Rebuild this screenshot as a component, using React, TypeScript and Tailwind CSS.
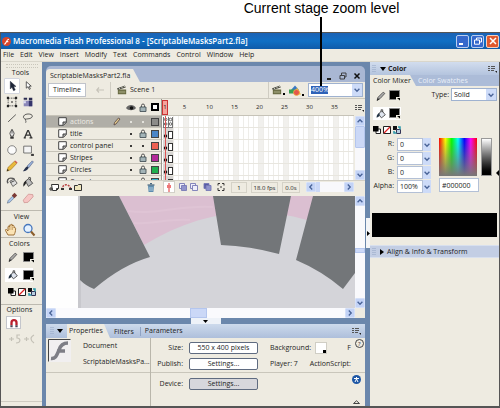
import type { ReactNode } from "react";

const MENUS = ["File", "Edit", "View", "Insert", "Modify", "Text", "Commands", "Control", "Window", "Help"];

interface Layer {
  name: string;
  locked: boolean;
  active?: boolean;
  swatch: string;
}

const LAYERS: Layer[] = [
  { name: "actions", locked: false, active: true, swatch: "bg-[#8b8b89]" },
  { name: "title", locked: true, swatch: "bg-[#4a86c8]" },
  { name: "control panel", locked: false, swatch: "bg-[#ee6152]" },
  { name: "Stripes", locked: true, swatch: "bg-[#b32a9a]" },
  { name: "Circles", locked: true, swatch: "bg-[#1fae4e]" },
  { name: "Complex", locked: true, swatch: "bg-[#38b6d0]" },
];

const FRAME_MARKS = [5, 10, 15, 20, 25, 30, 35];

function Icon({ children, size = "size-3.5" }: { children: ReactNode; size?: string }) {
  return (
    <svg viewBox="0 0 14 14" className={`${size} shrink-0`} fill="none" stroke="#333" strokeWidth="1" aria-hidden="true">
      {children}
    </svg>
  );
}

const TOOLS: { label: string; icon: ReactNode; selected?: boolean }[] = [
  { label: "Selection", selected: true, icon: <path d="M5 1.500v9l2-2 1.800 4 2-.9L9 7.500h2.700z" fill="#1c2438" stroke="#1c2438" strokeWidth=".5" /> },
  { label: "Subselection", icon: <path d="M5 2v7.500l2-1.700 1.500 3.200 1.200-.6L8.300 7.200h2.500z" fill="#fff" stroke="#333" strokeWidth=".9" /> },
  {
    label: "Free Transform",
    icon: (
      <>
        <path d="M2.500 2.500h9v9h-9z" strokeDasharray="2 1" strokeWidth=".9" />
        <path d="M1 1h2.500v2.500H1zM10.500 1H13v2.500h-2.500zM1 10.500h2.500V13H1zM10.500 10.500H13V13h-2.500zM6.200 6.200h1.600v1.600H6.200z" fill="#222" stroke="none" />
      </>
    ),
  },
  {
    label: "Gradient Transform",
    icon: (
      <>
        <path d="M2 5.500h10V12H2z" fill="#8b87b8" stroke="none" />
        <path d="M8 5.500h4V12H8z" fill="#35356b" stroke="none" />
        <path d="M2 2h4v2.500H2zM8 2h4v3H8z" fill="#2c2c50" stroke="none" />
        <path d="M1.500 6h3v2.500h-3z" fill="#dfdff2" stroke="none" />
      </>
    ),
  },
  { label: "Line", icon: <path d="M2.500 11.500 11.500 3" strokeWidth=".9" /> },
  { label: "Lasso", icon: <path d="M4.500 8.500C0 7.500 1 2.500 7 2.300c7-.1 6.500 5.200 0 5.700-2.500.3-3.500.2-3 1.500.3.800 1 .5.300 3" strokeWidth=".9" /> },
  {
    label: "Pen",
    icon: (
      <>
        <path d="M7 1.500 4.500 6l1 3.500h3l1-3.500z" fill="#e9e9e9" strokeWidth=".9" />
        <path d="M7 2v4.500" strokeWidth=".8" />
        <path d="M5 10h4v2.500H5z" fill="#333" stroke="none" />
      </>
    ),
  },
  { label: "Text", icon: <path d="M3 11.500 6.700 3h.8l3.500 8.500M4.500 8.300h5M2 11.500h2.500M8.800 11.500h3.400" strokeWidth="1.500" /> },
  { label: "Oval", icon: <circle cx="7" cy="7" r="5" fill="#fbfbfb" stroke="#555" strokeWidth=".8" /> },
  {
    label: "Rectangle",
    icon: (
      <>
        <path d="M2 2.500h9v8H2z" fill="#f4f4f4" stroke="#555" strokeWidth=".9" />
        <path d="M11 12h2.500v1.500H11z" fill="#111" />
      </>
    ),
  },
  {
    label: "Pencil",
    icon: (
      <>
        <path d="M1 13 2.500 8.500 9.800 1.500l2.700 2.500L5.500 11.500z" fill="#e9b93c" stroke="#8b6414" strokeWidth=".6" />
        <path d="m1 13 .8-2.400 1.700 1.500z" fill="#222" stroke="none" />
        <path d="m9.800 1.500 2.700 2.500 1-1L10.800.5z" fill="#d45c50" stroke="none" />
      </>
    ),
  },
  {
    label: "Brush",
    icon: (
      <>
        <path d="m6 7 6-6 1.300 1.300L8 9z" fill="#9bb3dc" stroke="#3e5176" strokeWidth=".6" />
        <path d="M1 13C3 11.500 3 9 6 7.200L7.800 9C6.500 12 4 13.200 1 13z" fill="#27324d" stroke="none" />
      </>
    ),
  },
  {
    label: "Ink Bottle",
    icon: (
      <>
        <path d="M2.500 8.500C.5 6 2 2.500 5.500 2.500S9 3 10 4" strokeWidth="1.600" stroke="#555" />
        <path d="m4.500 6 5-2.500 3.500 5-5 3.700z" fill="#ddd" strokeWidth=".8" />
        <path d="M5.500 7.500 10 5.500" />
      </>
    ),
  },
  {
    label: "Paint Bucket",
    icon: (
      <>
        <path d="m4 6 4-3 4.500 5.500-5 3.700z" fill="#bbb" strokeWidth=".9" />
        <path d="M1.700 12.500C1 9 2.500 6 5 5.500L4.500 9z" fill="#222" stroke="none" />
        <path d="M8 3V1.500L10 2v3" strokeWidth=".9" />
      </>
    ),
  },
  {
    label: "Eyedropper",
    icon: (
      <>
        <path d="m1.500 13 1-3L7.500 5l2 2L4.500 12z" fill="#a8c4ea" stroke="#4f6076" strokeWidth=".6" />
        <path d="m6.800 4.200 3.200-3.200 3 3-3.200 3.200z" fill="#7b3a35" stroke="none" />
      </>
    ),
  },
  {
    label: "Eraser",
    icon: <path d="m1.500 9.500 6-7 5 .5.500 2.500L7 12l-4.500.5z" fill="#f6c6c4" stroke="#c4817f" strokeWidth=".7" />,
  },
];

function Chevron({ dir = "down" }: { dir?: "up" | "down" | "left" | "right" }) {
  const d = {
    up: "M2 6.500 5 3.500l3 3",
    down: "m2 3.500 3 3 3-3",
    left: "M6.500 2 3.500 5l3 3",
    right: "m3.500 2 3 3-3 3",
  }[dir];
  return (
    <svg viewBox="0 0 10 10" className="size-2" fill="none" stroke="#4a6498" strokeWidth="1.700" aria-hidden="true">
      <path d={d} />
    </svg>
  );
}

function ScrollButton({ dir }: { dir: "up" | "down" | "left" | "right" }) {
  return (
    <button
      aria-label={`Scroll ${dir}`}
      className="flex size-[10px] shrink-0 items-center justify-center rounded-[1px] border border-[#d5e0f8] bg-[#c3d3f6]"
    >
      <Chevron dir={dir} />
    </button>
  );
}

function Clapper() {
  return (
    <svg viewBox="0 0 12 12" className="size-[10px]" aria-hidden="true">
      <path d="M1 5.500h10V11H1z" fill="#64663f" />
      <path d="M2 7h8v3H2z" fill="#8d8f68" />
      <path d="m0 4 9.500-3.500 1 2.500L1 6z" fill="#55564a" />
      <path d="m2 3.200 1.500 1.400M5 2l1.500 1.500M8 .9l1.300 1.400" stroke="#eee" strokeWidth="1" />
    </svg>
  );
}

function Swatch() {
  return (
    <svg viewBox="0 0 12 11" className="h-[11px] w-3 shrink-0" aria-hidden="true">
      <path d="M.5.500h10v9H.500z" fill="#000" stroke="#888" />
      <path d="M7 7h5v4H7z" fill="#eeece2" />
      <path d="M8 8h3v2.500z" fill="#000" />
    </svg>
  );
}

function StrokePencil() {
  return (
    <Icon size="size-3">
      <path d="m2.500 12 1-3.500 6-6L11.500 4 6 10z" fill="#aaa" strokeWidth=".8" />
      <path d="m2.500 12 1-2 1 1z" fill="#222" />
    </Icon>
  );
}

function FillBucket() {
  return (
    <Icon size="size-3">
      <path d="m4 7 4-4 4 5-4.500 3.500z" fill="#dfe5ef" strokeWidth=".9" />
      <path d="M2 11.500C1.500 9 3 6 5.500 6L5 9.500z" fill="#234" stroke="none" />
      <path d="M7 5V2h2v3" strokeWidth=".8" />
    </Icon>
  );
}

function ColorActions({ className }: { className: string }) {
  return (
    <div className={`flex ${className}`}>
      <button aria-label="Black and white">
        <svg viewBox="0 0 8 8" className="size-2">
          <path d="M3 3h4.500v4.500H3z" fill="#fff" stroke="#222" />
          <path d="M0 0h5.500v5.500H0z" fill="#000" />
        </svg>
      </button>
      <button aria-label="No color">
        <svg viewBox="0 0 8 8" className="size-2">
          <path d="M.5.500h7v7h-7z" fill="#fff" stroke="#222" />
          <path d="m1 7 6-6" stroke="#d22" strokeWidth="1.300" />
        </svg>
      </button>
      <button aria-label="Swap colors">
        <svg viewBox="0 0 8 8" className="size-2">
          <path d="M0 0h4v4H0z" fill="#111" />
          <path d="M3.500 3.500h4v4h-4z" fill="#b9cfe0" stroke="#335" />
          <path d="M5 1h2v2.500M1 5v2h2.500" fill="none" stroke="#2b98a8" strokeWidth="1.500" />
        </svg>
      </button>
    </div>
  );
}

function PanelMenuIcon() {
  return (
    <svg viewBox="0 0 9 8" className="h-2 w-[9px]" stroke="#555" fill="none" aria-hidden="true">
      <path d="M0 1.500h2M0 3.500h2M0 5.500h2M3 1.500h4M3 3.500h4M3 5.500h3" />
      <path d="M7 6h2v2z" fill="#222" stroke="none" />
    </svg>
  );
}

function Grip({ className = "" }: { className?: string }) {
  return (
    <svg viewBox="0 0 4 8" className={`h-2 w-1 ${className}`} stroke="#93a5c4" aria-hidden="true">
      <path d="M1 0v8M3 0v8" strokeWidth="1" strokeDasharray="1 1" />
    </svg>
  );
}

function ToolsPanel() {
  return (
    <aside className="flex w-[41px] shrink-0 flex-col items-center bg-[#eeebe1]">
      <div className="mt-0.5 h-1 w-8 border-y border-dotted border-[#c9c6bb]" />
      <h2 className="h-2.5 pr-0.5 leading-[10px]">Tools</h2>
      <div className="grid grid-cols-[16px_16px] pr-1">
        {TOOLS.map((tool) => (
          <button
            key={tool.label}
            aria-label={tool.label}
            className={
              tool.selected
                ? "flex size-4 items-center justify-center rounded-[1px] border border-[#d3d6de] bg-white"
                : "flex size-4 items-center justify-center"
            }
          >
            <Icon size="size-3">{tool.icon}</Icon>
          </button>
        ))}
      </div>

      <section className="mt-1 flex w-full flex-col items-center border-t border-[#bdbab0]">
        <h2 className="leading-[12px]">View</h2>
        <div className="flex gap-1 pr-1">
          <button aria-label="Hand">
            <Icon>
              <path
                d="M4 12 1.500 7.500c-.5-1 .7-1.500 1.300-.7L4 8V4c0-1 1.300-1 1.400 0V2.500c.1-1 1.400-1 1.500 0V2c.2-1 1.500-.8 1.600 0v1c.2-.9 1.500-.8 1.600.2V5c.3-.7 1.500-.5 1.500.5 0 3-.6 4.500-1.600 6.500z"
                fill="#fbe3b4"
                stroke="#94652a"
                strokeWidth=".9"
              />
              <path d="M5.400 4v3M7 3v4M8.500 3.500V7" stroke="#b68a4f" strokeWidth=".6" />
            </Icon>
          </button>
          <button aria-label="Zoom">
            <Icon>
              <circle cx="6" cy="5.500" r="4" fill="#e4f1ff" stroke="#4677bd" strokeWidth="1.300" />
              <path d="m9 8.500 3.500 4" stroke="#8b5d2b" strokeWidth="2" />
            </Icon>
          </button>
        </div>
      </section>

      <section className="flex w-full flex-col border-t border-[#bdbab0]">
        <h2 className="pr-1 text-center leading-[12px]">Colors</h2>
        <button aria-label="Stroke color" className="mx-1 flex h-[14px] w-7 items-center gap-1 pl-0.5">
          <StrokePencil />
          <Swatch />
        </button>
        <button aria-label="Fill color" className="mx-1 mt-1 flex h-[14px] w-7 items-center gap-1 bg-white pl-0.5">
          <FillBucket />
          <Swatch />
        </button>
        <ColorActions className="gap-0.5 pt-1.5 pb-2 pl-[7px]" />
      </section>

      <section className="flex w-full grow flex-col border-t border-[#bdbab0]">
        <h2 className="pr-1 text-center leading-[10px]">Options</h2>
        <button
          aria-label="Snap to objects"
          className="mt-px ml-[5px] flex h-[13px] w-[15px] items-center justify-center border border-[#c4c6cc] bg-white"
        >
          <Icon size="size-2.5">
            <path d="M3.500 10V6.500a3.500 3.500 0 0 1 7 0V10" stroke="#b91f2e" strokeWidth="3.200" />
            <path d="M3.500 10v3M10.500 10v3" stroke="#445" strokeWidth="3.200" />
          </Icon>
        </button>
        <svg viewBox="0 0 26 12" className="mt-1 ml-2 h-3 w-[26px]" fill="none" stroke="#c4c1b7" strokeWidth="1.200" aria-hidden="true">
          <path d="M0 6h5M2.500 4v4M11 2H8v3c4 0 4 5-1 5M15 6h5M17.500 4v4M25 2c-4 2-4 5 0 8" />
        </svg>
        <div className="mt-auto mb-1 border-t border-[#cfccc2]" />
      </section>
    </aside>
  );
}

function Lock() {
  return (
    <svg viewBox="0 0 8 9" className="h-[9px] w-2" aria-hidden="true">
      <path d="M2.500 4V2.500a1.500 1.500 0 0 1 3 0V4" fill="none" stroke="#555" />
      <path d="M1 4h6v4.500H1z" fill="#a3b4b8" stroke="#48555a" strokeWidth=".9" />
    </svg>
  );
}

function LayerRow({ layer }: { layer: Layer }) {
  return (
    <li
      className={
        layer.active
          ? "flex h-3 items-center border-b border-[#c6c3b8] bg-[#b0aea7] pl-3 text-[#eeece5]"
          : "flex h-3 items-center border-b border-[#c6c3b8] pl-3"
      }
    >
      <svg viewBox="0 0 9 9" className="mr-[3px] size-[9px] shrink-0" aria-hidden="true">
        <path d="M.7.700h7.600v4.800L5.500 8.300H.700z" fill="#fff" stroke="#444" />
        <path d="M8.300 5H5v3.300" fill="#999" stroke="#444" />
      </svg>
      <span className="grow">{layer.name}</span>
      {layer.active && (
        <svg viewBox="0 0 8 9" className="mr-1 h-[9px] w-2" aria-hidden="true">
          <path d="m1 8 .5-2.500L5.500 1l1.500 1L3 7z" fill="#e2c98c" stroke="#544" strokeWidth=".8" />
        </svg>
      )}
      <span className="flex w-3 justify-center">
        <i className={layer.active ? "size-0.5 rounded-full bg-[#f4f3ee]" : "size-0.5 rounded-full bg-black"} />
      </span>
      <span className="flex w-3 justify-center">
        {layer.locked ? <Lock /> : <i className={layer.active ? "size-0.5 rounded-full bg-[#f4f3ee]" : "size-0.5 rounded-full bg-black"} />}
      </span>
      <span className="flex w-3 justify-center">
        <i className={`size-2 border border-[#444] ${layer.swatch}`} />
      </span>
    </li>
  );
}

function FrameGrid() {
  return (
    <svg viewBox="0 0 192 64" preserveAspectRatio="xMinYMin slice" className="h-16 w-full" shapeRendering="crispEdges" aria-hidden="true">
      <path d="M0 0h192v64H0z" fill="#fff" />
      {FRAME_MARKS.map((n) => (
        <path key={n} d={`M${n * 5 - 4} 0h5v64h-5z`} fill="#f1f0ed" />
      ))}
      {Array.from({ length: 38 }, (_, i) => (
        <path key={i} d={`M${i * 5 + 6.5} 0v64`} stroke="#eeede9" />
      ))}
      {[12, 24, 36, 48, 60].map((y) => (
        <path key={y} d={`M0 ${y - 0.5}h192`} stroke="#e8e6df" />
      ))}
      {[1, 2, 3, 4, 5].map((row) => (
        <g key={row}>
          <path d={`M1 ${row * 12}h10v11H1z`} fill="#d8d6d3" />
          <path d={`M6.500 ${row * 12 + 3.5}h4v7h-4z`} fill="#fff" stroke="#333" />
          <circle cx="3.500" cy={row * 12 + 8} r="1.700" fill="#111" shapeRendering="auto" />
        </g>
      ))}
      <path d="M1.500 1v10h9V1M6 1v10" fill="none" stroke="#777" />
      <g fill="#fff" stroke="#333" strokeWidth=".7" shapeRendering="auto">
        <circle cx="3.700" cy="3.500" r="1.300" />
        <circle cx="8.500" cy="3.500" r="1.300" />
        <circle cx="3.700" cy="8" r="1.300" />
        <circle cx="8.500" cy="8" r="1.300" />
      </g>
      <path d="M3.500 0v64" stroke="#d55" strokeWidth="1" />
    </svg>
  );
}

function Timeline() {
  return (
    <section aria-label="Timeline" className="bg-[#eeebe1] pb-[3px]">
      <div className="flex">
        <div className="w-[116px] shrink-0 border-r border-[#9a988f]">
          <div className="flex h-[17px] items-center justify-end border-b border-[#c6c3b8]">
            <span className="flex w-3 justify-center">
              <svg viewBox="0 0 10 7" className="h-[7px] w-2.5" aria-label="Show all layers">
                <path d="M0 4c2-4 8-4 10 0-2 3-8 3-10 0z" fill="#666" />
                <circle cx="5.500" cy="4" r="1.800" fill="#111" />
              </svg>
            </span>
            <span className="flex w-3 justify-center">
              <Lock />
            </span>
            <span className="flex w-3 justify-center">
              <i className="size-2 border-2 border-black bg-white" />
            </span>
          </div>
          <ul className="h-16 overflow-hidden">
            {LAYERS.map((layer) => (
              <LayerRow key={layer.name} layer={layer} />
            ))}
          </ul>
        </div>

        <div className="min-w-0 grow">
          <div className="flex h-[17px] items-center overflow-hidden border-b border-[#c6c3b8] text-[6px]">
            <span className="flex h-[15px] w-[6px] shrink-0 items-center justify-center border border-[#c33] bg-[#f5a39b]">1</span>
            <span className="w-[4px] shrink-0" />
            {FRAME_MARKS.map((n) => (
              <span key={n} className="flex w-[25px] shrink-0 items-center justify-center">
                {n}
              </span>
            ))}
          </div>
          <FrameGrid />
        </div>

        <div className="flex w-[11px] shrink-0 flex-col items-center">
          <button aria-label="Frame view" className="flex h-[17px] items-center">
            <PanelMenuIcon />
          </button>
          <ScrollButton dir="up" />
          <div className="w-[10px] grow bg-[#f8f8fb]">
            <div className="h-[22px] rounded-[1px] border border-[#b4c6ee] bg-[#cbd8f7]" />
          </div>
          <ScrollButton dir="down" />
        </div>
      </div>

      <div className="flex h-[13px] items-center border-t border-[#d2cfc5] pl-[3px]">
        <div className="flex w-[98px] shrink-0">
          <svg viewBox="0 0 34 9" className="h-[9px] w-[34px]" fill="#fff" stroke="#333" aria-hidden="true">
            <path d="M2.500 1.500h7v4l-2 2h-4zM9.500 5.500h-2v2" />
            <path d="M0 6h4M2 4v4" />
            <path d="M13 7c0-7 8-7 9 0" fill="none" stroke="#b44" strokeDasharray="2 1" strokeWidth="1.500" />
            <path d="M12 6h3M20 6h3" strokeWidth="2" />
            <path d="M25.500 2.500h3l1-1h3v6h-7z" fill="#eee6bd" />
          </svg>
        </div>
        <button aria-label="Delete layer" className="mr-2 w-2">
          <svg viewBox="0 0 8 9" className="h-[9px] w-2">
            <path d="M1 2.500h6L6.400 9H1.600z" fill="#5d8cae" />
            <path d="M.5 2h7M3 .7h2" stroke="#244a6b" />
            <path d="M3 4v4M5 4v4" stroke="#d6e6f2" strokeWidth=".7" />
          </svg>
        </button>
        <div className="flex min-w-0 grow items-center text-[6px]">
          <button aria-label="Center frame" className="flex h-3 w-3 shrink-0 items-center justify-center border border-[#d2d0c8] bg-white">
            <svg viewBox="0 0 6 9" className="h-[9px] w-1.5" aria-hidden="true">
              <path d="M3 0v9" stroke="#d33" />
              <path d="M1 2h4v3H1z" fill="#e77" />
            </svg>
          </button>
          <svg viewBox="0 0 50 10" className="mx-[3px] h-2.5 w-[50px] shrink-0" fill="#eeeefa" stroke="#7779b5" strokeWidth=".9" aria-hidden="true">
            <path d="M1.500 1.500h5v5h-5z" />
            <path d="M3.500 3.500h5v5h-5z" fill="#9194cc" />
            <path d="M12.500 1.500h5v5h-5z" />
            <path d="M14.500 3.500h5v5h-5z" />
            <path d="M26 1.500h5v5h-5z" fill="#575aa5" />
            <path d="M28 3.500h5v5h-5z" fill="#9093cc" />
            <path d="M42 1.500h-2v2M40 6v2.500h2M44 1.500h2v2M46 6v2.500h-2M42 5h2" fill="none" stroke="#222" />
          </svg>
          <span className="h-[11px] w-4 shrink-0 border border-[#d5d2c7] text-center leading-[10px]">1</span>
          <span className="ml-1 h-[11px] w-[27px] shrink-0 border border-[#d5d2c7] text-center leading-[10px]">18.0 fps</span>
          <span className="ml-1 h-[11px] w-[18px] shrink-0 border border-[#d5d2c7] text-center leading-[10px]">0.0s</span>
          <div className="mr-[11px] ml-1.5 flex grow bg-[#f8f8fb]">
            <ScrollButton dir="left" />
            <div className="h-[10px] w-1 bg-[#cbd8f7]" />
            <div className="grow" />
            <ScrollButton dir="right" />
          </div>
        </div>
      </div>
    </section>
  );
}

function Stage() {
  return (
    <section aria-label="Stage" className="bg-[#fdfdfc]">
      <div className="flex">
        <svg viewBox="0 0 309 112" preserveAspectRatio="xMidYMid slice" className="h-[112px] min-w-0 grow">
          <path d="M0 0h309v112H0z" fill="#fefefe" />
          <path d="M32 0h277v112H32z" fill="#d4d4d9" />
          <path d="M32 0h3v112h-3z" fill="#c8c8cd" />
          <path d="M73 0h197l-9 24C205 8 150 17 98 49z" fill="#dbbfd1" />
          <path d="M82 15c30 4 50-6 85-4M88 27c20 2 32-5 56-3" stroke="#dfc4d5" strokeWidth="2" fill="none" />
          <path d="M34 0h39l31 61Q76 69 48 93 40 90 34 84z" fill="#737679" />
          <path d="M167 0h78l-12 58Q204 50 175 49z" fill="#737679" />
          <path d="M267 0h42v77l-12 16Q276 75 250 64z" fill="#737679" />
        </svg>
        <div className="flex w-[10px] shrink-0 flex-col bg-[#f9f9fc]">
          <ScrollButton dir="up" />
          <div className="h-[42px]" />
          <div className="h-[5px] border border-[#b4c6ee] bg-[#cbd8f7]" />
          <div className="grow" />
          <ScrollButton dir="down" />
        </div>
      </div>
      <div className="flex h-[10px] bg-[#fafafd]">
        <ScrollButton dir="left" />
        <div className="w-[134px]" />
        <div className="w-[17px] border border-[#b4c6ee] bg-[#cbd8f7]" />
        <div className="grow" />
        <ScrollButton dir="right" />
        <div className="w-[10px] bg-[#eeebe1]" />
      </div>
    </section>
  );
}

function DocumentWindow() {
  return (
    <section className="overflow-hidden rounded-t-[5px] bg-[#a9b7d3]">
      <header className="flex h-4 items-end">
        <h2 className="flex h-[13px] w-[94px] items-center rounded-tl-[4px] bg-[#eeebe1] pl-1 [clip-path:polygon(0_0,87px_0,100%_100%,0_100%)]">
          ScriptableMasksPart2.fla
        </h2>
        <div className="mr-1 ml-auto flex h-full items-center gap-1.5 pt-1">
          <button aria-label="Minimize document" className="flex h-2 w-1.5 items-end">
            <i className="h-0.5 w-1 bg-[#222]" />
          </button>
          <button aria-label="Restore document">
            <svg viewBox="0 0 8 8" className="size-2" fill="none" stroke="#333">
              <path d="M2.500 3V1h4.500v4H6M1 3.500h4.500V7H1z" strokeWidth=".9" />
            </svg>
          </button>
          <button aria-label="Close document">
            <svg viewBox="0 0 8 8" className="size-2" stroke="#111" strokeWidth="1.500">
              <path d="m1.500 1.500 5 5M6.500 1.500l-5 5" />
            </svg>
          </button>
        </div>
      </header>

      <div className="flex h-[17px] items-center border-b border-[#cbc8bd] bg-[#eeebe1] pr-0.5 pl-0.5">
        <button className="h-[14px] w-[38px] border border-[#c0c3ca] bg-white text-center leading-[12px]">Timeline</button>
        <svg viewBox="0 0 8 6" className="mr-1.5 ml-2.5 h-1.5 w-2" fill="none" stroke="#c6c3b9" strokeWidth="1.200" aria-hidden="true">
          <path d="M8 3H1M3 .5.800 3 3 5.500" />
        </svg>
        <i className="mr-1.5 h-4 w-px bg-[#cfccc2]" />
        <Clapper />
        <span className="ml-[3px]">Scene 1</span>
        <i className="mr-[3px] ml-auto h-4 w-px bg-[#cfccc2]" />
        <button aria-label="Edit scene" className="flex items-end">
          <Clapper />
          <i className="ml-px size-0.5 bg-black" />
        </button>
        <button aria-label="Edit symbols" className="ml-1 flex items-end">
          <svg viewBox="0 0 12 11" className="h-[11px] w-3">
            <path d="M6 .5 10 5H2z" fill="#3a79c4" />
            <path d="M0 4.500h6v4H0z" fill="#3aa052" />
            <path d="m8 2.500 4 7H5z" fill="#e8c33f" />
            <circle cx="7.500" cy="7.500" r="3" fill="#e4574a" stroke="#f0c040" strokeWidth=".7" />
          </svg>
          <i className="ml-px size-0.5 bg-black" />
        </button>
        <div className="ml-1 flex h-[14px] w-[55px] items-center border border-[#9fb2d0] bg-white pl-0.5">
          <input aria-label="Stage zoom" defaultValue="400%" className="h-2 w-[17px] bg-[#2f62b8] p-0 text-white outline-none" />
          <button aria-label="Zoom levels" className="ml-auto flex h-full w-[10px] items-center justify-center bg-[#cddbf8]">
            <Chevron />
          </button>
        </div>
      </div>

      <Timeline />
      <Stage />
    </section>
  );
}

function PropertiesPanel() {
  return (
    <section aria-label="Property inspector" className="flex grow flex-col bg-[#eeebe1]">
      <div className="flex h-[14px] items-center bg-linear-to-b from-[#cddaec] to-[#aebfdb] text-[#222]">
        <Grip className="ml-1" />
        <svg viewBox="0 0 6 4" className="ml-[3px] h-1 w-1.5" aria-hidden="true">
          <path d="M0 0h6L3 4z" />
        </svg>
        <button className="ml-1 h-full w-[43px] bg-[#eeebe1] pl-0.5 text-left [clip-path:polygon(0_0,37px_0,100%_100%,0_100%)]">Properties</button>
        <button className="border-r border-[#8fa3c4] pr-1.5 pl-1 leading-[9px]">Filters</button>
        <button className="px-1">Parameters</button>
        <span className="mr-1 ml-auto">
          <PanelMenuIcon />
        </span>
      </div>

      <div className="flex grow">
        <div className="w-[105px] shrink-0 border-r border-[#b9b6ab]">
          <div className="flex h-[35px] gap-3 border-b border-[#c9c6bb] pl-0.5">
            <svg viewBox="0 0 23 23" className="mt-px size-[23px] shrink-0" aria-label="Flash document">
              <path d="M1 1h22v22H1z" fill="#f1eff0" />
              <path d="M.5 22.500V.500h22" fill="none" stroke="#444" />
              <path d="M3 19.500c5 .5 6-4 8-8.500 1.500-5 4-7 9-7M9 12h8" fill="none" stroke="#7e7e86" strokeWidth="3.500" />
            </svg>
            <div className="min-w-0">
              <p className="mt-[3px] leading-[10px]">Document</p>
              <p className="mt-1.5 leading-[10px] whitespace-nowrap">ScriptableMasksPa...</p>
            </div>
          </div>
        </div>

        <div className="min-w-0 grow">
          <div className="flex h-[35px] border-b border-[#c9c6bb]">
            <div className="grid shrink-0 grid-cols-[32px_69px] grid-rows-[12px_12px] gap-x-1.5 gap-y-1 pt-1 leading-[12px]">
              <span id="size" className="text-right">Size:</span>
              <button aria-describedby="size" className="rounded-[2px] border border-[#5f6b80] bg-white leading-[10px]">550 x 400 pixels</button>
              <span id="publish" className="text-right">Publish:</span>
              <button aria-describedby="publish" className="rounded-[2px] border border-[#5f6b80] bg-white leading-[10px]">Settings...</button>
            </div>
            <div className="ml-3 grid grow grid-rows-[12px_12px] gap-y-1 pt-1 leading-[12px]">
              <div className="flex items-center">
                Background:
                <button aria-label="Background color" className="ml-1 flex size-3 items-end justify-end border border-[#d0cec5] bg-white">
                  <i className="size-[3px] bg-black" />
                </button>
                <span className="ml-auto">F</span>
              </div>
              <div className="flex gap-3 whitespace-nowrap">
                <span>Player: 7</span>
                <span>ActionScript:</span>
              </div>
            </div>
            <button aria-label="Help" className="mt-px mr-1 ml-1 flex size-[9px] shrink-0 items-center justify-center rounded-full border border-[#444] text-[6px] leading-none">
              ?
            </button>
          </div>
          <div className="flex items-start">
            <div className="grid grid-cols-[32px_69px] grid-rows-[12px] gap-x-1.5 pt-[5px] leading-[12px]">
              <span id="device" className="text-right">Device:</span>
              <button aria-describedby="device" className="rounded-[2px] border border-[#5f6b80] bg-[#d7d7dc] leading-[10px]">Settings...</button>
            </div>
            <div className="mr-1 ml-auto flex flex-col items-center gap-4 pt-0.5">
              <svg viewBox="0 0 9 9" className="size-[9px]" aria-label="Accessibility">
                <circle cx="4.500" cy="4.500" r="4.500" fill="#1e57a5" />
                <path d="M2 3.500h5M4.500 2v2.500M4.500 4 3 7M4.500 4 6 7" stroke="#fff" strokeWidth="1" />
              </svg>
              <svg viewBox="0 0 7 4" className="h-1 w-[7px]" fill="none" stroke="#444" aria-hidden="true">
                <path d="M.5 3.500 3.500.800l3 2.700z" />
              </svg>
            </div>
          </div>
        </div>
      </div>
    </section>
  );
}

function Spinner({ id, label, value }: { id: string; label: string; value: string }) {
  return (
    <>
      <label htmlFor={id} className="text-right leading-[12px]">
        {label}
      </label>
      <div className="flex h-[13px]">
        <input id={id} defaultValue={value} className="w-[26px] border border-[#b3c0d6] bg-white px-0.5 outline-none" />
        <button aria-label={`${label} slider`} className="flex w-2 items-center justify-center bg-[#cddbf8]">
          <Chevron />
        </button>
      </div>
    </>
  );
}

function ColorPanel() {
  return (
    <aside className="flex w-[130px] shrink-0 flex-col border-r border-[#555] bg-[#eeebe1]">
      <header className="flex h-[13px] items-center bg-linear-to-b from-[#d2ddee] to-[#b4c4de]">
        <Grip className="ml-0.5" />
        <svg viewBox="0 0 6 4" className="mr-0.5 ml-1 h-1 w-1.5" aria-hidden="true">
          <path d="M0 0h6L3 4z" />
        </svg>
        <h2 className="font-bold">Color</h2>
        <span className="mr-0.5 ml-auto">
          <PanelMenuIcon />
        </span>
      </header>
      <div className="flex h-[11px] bg-[#acbcd8]">
        <button className="w-[46px] bg-[#eeebe1] pl-[3px] text-left leading-[11px] [clip-path:polygon(0_0,40px_0,100%_100%,0_100%)]">Color Mixer</button>
        <button className="ml-0.5 leading-[11px] text-[#e9eff9]">Color Swatches</button>
      </div>

      <div className="flex justify-between pt-0.5 pr-0.5">
        <div className="ml-[3px]">
          <button aria-label="Stroke color" className="flex h-[15px] w-7 items-center gap-0.5 pl-0.5">
            <StrokePencil />
            <Swatch />
          </button>
          <button aria-label="Fill color" className="mt-1 flex h-[13px] w-7 items-center gap-0.5 bg-white pl-0.5">
            <FillBucket />
            <Swatch />
          </button>
          <ColorActions className="mt-1.5 gap-0.5" />
        </div>
        <div className="flex h-[13px] items-center gap-0.5">
          <label htmlFor="fill-type">Type:</label>
          <div className="relative">
            <select id="fill-type" className="block h-[13px] w-[46px] appearance-none border border-[#9fb2d0] bg-white px-0.5">
              <option>Solid</option>
            </select>
            <span className="pointer-events-none absolute inset-y-px right-px flex w-2.5 items-center justify-center bg-[#cddbf8]">
              <Chevron />
            </span>
          </div>
        </div>
      </div>

      <div className="mt-1 flex">
        <div className="grid grid-cols-[24px_34px] gap-x-[3px] gap-y-px">
          <Spinner id="red" label="R:" value="0" />
          <Spinner id="green" label="G:" value="0" />
          <Spinner id="blue" label="B:" value="0" />
          <Spinner id="alpha" label="Alpha:" value="100%" />
        </div>
        <div className="ml-2">
          <div className="flex gap-1">
            <div className="size-[38px] bg-[linear-gradient(to_bottom,transparent,#777),linear-gradient(to_right,#f00,#ff0,#0f0,#0ff,#00f,#f0f,#f00)]" />
            <div className="h-[38px] w-[11px] border border-[#999] bg-linear-to-b from-white to-black" />
            <svg viewBox="0 0 3 6" className="h-1.5 w-[3px] self-end" aria-hidden="true">
              <path d="M3 0v6L0 3z" />
            </svg>
          </div>
          <input aria-label="Hex color" defaultValue="#000000" className="mt-0.5 block h-[14px] w-10 border border-[#b3c0d6] bg-white px-0.5 outline-none" />
        </div>
      </div>

      <div className="mx-0.5 mt-5 h-6 bg-black" />
      <header className="mt-2 flex h-[13px] items-center border-y border-[#d8e0ee] bg-[#c3cee4]">
        <Grip className="ml-0.5" />
        <svg viewBox="0 0 4 6" className="mr-[3px] ml-1 h-1.5 w-1" aria-hidden="true">
          <path d="M0 0v6l4-3z" />
        </svg>
        <h2>Align &amp; Info &amp; Transform</h2>
      </header>
    </aside>
  );
}

export default function App() {
  return (
    <div className="flex min-h-screen flex-col bg-white font-['Open_Sans','Noto_Sans',sans-serif] text-[7px] leading-[10px] text-[#1d1d1d]">
      <div className="relative flex h-8 shrink-0 justify-center pl-[143px] font-['Liberation_Sans',Arial,sans-serif] text-[14px] leading-[17px] text-black">
        Current stage zoom level
        {/* callout line from the caption down to the zoom box */}
        <i className="absolute top-[17px] left-[calc(50%+70px)] z-10 h-[69px] w-0.5 bg-black" />
      </div>

      <main className="flex grow flex-col border-t border-b-2 border-l border-[#555]">
        <header className="flex h-4 items-center bg-linear-to-b from-[#1b62b5] via-[#0f6fc4] to-[#0f5ba9] pr-px pl-px text-white">
          <svg viewBox="0 0 10 10" className="mr-0.5 size-[9px]" aria-hidden="true">
            <circle cx="5" cy="5" r="5" fill="#d8452a" />
            <path d="M2.500 8C5 8 4.500 2.500 7.800 2.500M4.500 5.200h2.500" fill="none" stroke="#fff" strokeWidth="1.300" />
          </svg>
          <h1 className="text-[8px] font-semibold whitespace-nowrap">Macromedia Flash Professional 8 - [ScriptableMasksPart2.fla]</h1>
          <div className="ml-auto flex gap-0.5">
            <button aria-label="Minimize" className="flex size-[13px] items-end rounded-[2px] border border-[#b9cdf0] bg-[#3568cc] p-0.5">
              <i className="h-0.5 w-1 bg-white" />
            </button>
            <button aria-label="Restore" className="flex size-[13px] items-center justify-center rounded-[2px] border border-[#b9cdf0] bg-[#3568cc]">
              <svg viewBox="0 0 8 8" className="size-2" fill="none" stroke="#fff">
                <path d="M2.500 3V1h5v4H6M.500 3h5v4.200h-5z" />
              </svg>
            </button>
            <button aria-label="Close" className="flex size-[13px] items-center justify-center rounded-[2px] border border-[#f3d0c0] bg-[#e0592e]">
              <svg viewBox="0 0 8 8" className="size-2" stroke="#fff" strokeWidth="1.500">
                <path d="m1 1 6 6M7 1 1 7" />
              </svg>
            </button>
          </div>
        </header>

        <nav className="flex h-[13px] shrink-0 items-center gap-1.5 border-b border-[#d9d6cb] bg-[#eeebe1] pl-0.5">
          {MENUS.map((menu) => (
            <button key={menu}>{menu}</button>
          ))}
        </nav>

        <div className="flex grow">
          <ToolsPanel />
          <div className="flex min-w-0 grow flex-col bg-[#6b87ac] pt-1 pl-1">
            <div className="relative mr-[5px] flex grow flex-col">
              <DocumentWindow />
              <div className="flex h-1.5 shrink-0 justify-center">
                <button aria-label="Collapse panel" className="flex h-full w-[30px] items-center justify-center bg-[#eef2f8]">
                  <svg viewBox="0 0 5 3" className="h-[3px] w-[5px]">
                    <path d="M0 0h5L2.500 3z" />
                  </svg>
                </button>
              </div>
              <PropertiesPanel />
              {/* handle that folds the right-hand dock */}
              <button aria-label="Collapse dock" className="absolute top-[152px] -right-[5px] flex h-[30px] w-1 items-center justify-center bg-[#f3f4f6]">
                <svg viewBox="0 0 3 5" className="h-[5px] w-[3px]">
                  <path d="M0 0v5l3-2.500z" />
                </svg>
              </button>
            </div>
          </div>
          <ColorPanel />
        </div>
      </main>
    </div>
  );
}
